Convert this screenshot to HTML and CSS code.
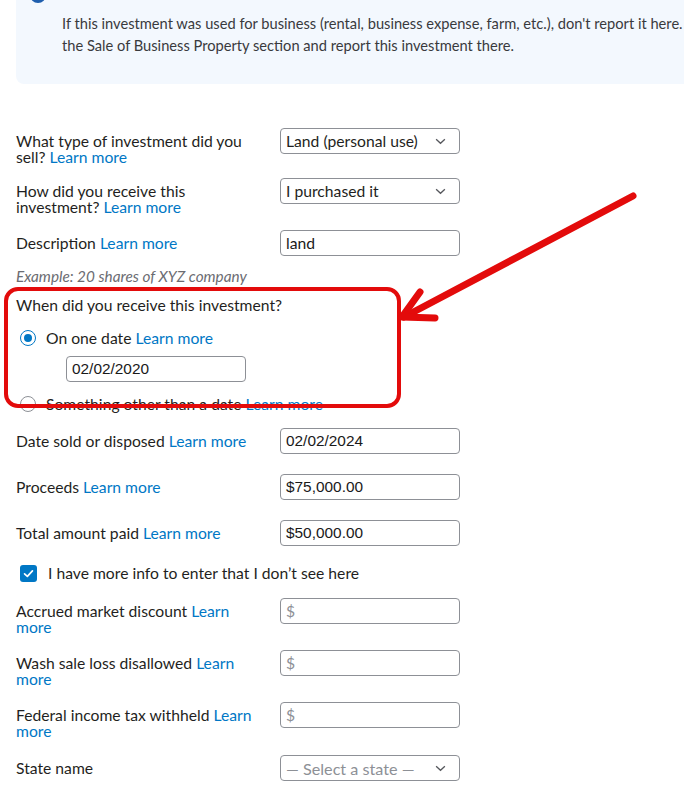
FILE: index.html
```html
<!DOCTYPE html>
<html lang="en">
<head>
<meta charset="utf-8">
<title>Investment sale</title>
<link rel="stylesheet" href="styles.css">
</head>
<body>
<div class="page">
  <div class="banner">
    <div class="banner-head"><span class="info-dot"></span></div>
    <p class="banner-text">If this investment was used for business (rental, business expense, farm, etc.), don't report it here. Go to the Sale of Business Property section and report this investment there.</p>
  </div>

  <form class="form">
    <div class="row">
      <div class="label">What type of investment did you sell? <a class="link">Learn more</a></div>
      <div class="field select"><span>Land (personal use)</span><svg class="chev" viewBox="0 0 12 8"><path d="M1 1.5 L6 6 L11 1.5"/></svg></div>
    </div>
    <div class="row row-g12">
      <div class="label">How did you receive this investment? <a class="link">Learn more</a></div>
      <div class="field select"><span>I purchased it</span><svg class="chev" viewBox="0 0 12 8"><path d="M1 1.5 L6 6 L11 1.5"/></svg></div>
    </div>
    <div class="row row-g14">
      <div class="label">Description <a class="link">Learn more</a></div>
      <div class="field"><span class="val-text">land</span></div>
    </div>
    <p class="hint">Example: 20 shares of XYZ company</p>

    <div class="receive">
      <p class="question">When did you receive this investment?</p>
      <div class="radio-row">
        <span class="radio checked"></span>
        <span class="radio-label">On one date <a class="link">Learn more</a></span>
      </div>
      <div class="field date-field"><span class="val">02/02/2020</span></div>
      <div class="radio-row radio-row-2">
        <span class="radio"></span>
        <span class="radio-label">Something other than a date <a class="link">Learn more</a></span>
      </div>
    </div>

    <div class="row row-sold">
      <div class="label">Date sold or disposed <a class="link">Learn more</a></div>
      <div class="field"><span class="val">02/02/2024</span></div>
    </div>
    <div class="row row-g20">
      <div class="label">Proceeds <a class="link">Learn more</a></div>
      <div class="field"><span class="val">$75,000.00</span></div>
    </div>
    <div class="row row-g20">
      <div class="label">Total amount paid <a class="link">Learn more</a></div>
      <div class="field"><span class="val">$50,000.00</span></div>
    </div>

    <div class="check-row">
      <span class="checkbox"><svg viewBox="0 0 16 16"><path d="M3.8 8.3 L6.8 11 L12.2 5.2"/></svg></span>
      <span class="check-label">I have more info to enter that I don’t see here</span>
    </div>

    <div class="row row-accrued">
      <div class="label">Accrued market discount <a class="link">Learn more</a></div>
      <div class="field"><span class="ph">$</span></div>
    </div>
    <div class="row row-g14">
      <div class="label">Wash sale loss disallowed <a class="link">Learn more</a></div>
      <div class="field"><span class="ph">$</span></div>
    </div>
    <div class="row row-g14">
      <div class="label">Federal income tax withheld <a class="link">Learn more</a></div>
      <div class="field"><span class="ph">$</span></div>
    </div>
    <div class="row row-g15">
      <div class="label">State name</div>
      <div class="field select"><span class="ph-text">— Select a state —</span><svg class="chev" viewBox="0 0 12 8"><path d="M1 1.5 L6 6 L11 1.5"/></svg></div>
    </div>
  </form>

  <div class="highlight-box"></div>
  <svg class="arrow" viewBox="0 0 684 804">
    <path d="M633 196 L404 317"/>
    <path d="M420 292 L402 317 L435 318"/>
  </svg>
</div>
</body>
</html>
```

FILE: styles.css
```css
html, body {
  margin: 0;
  padding: 0;
  background: #ffffff;
}
body {
  font-family: Lato, "Noto Sans", "Liberation Sans", sans-serif;
  color: #1f1f22;
  overflow: hidden;
  width: 684px;
  height: 804px;
}
.page {
  position: relative;
  width: 684px;
  height: 804px;
  overflow: hidden;
}

/* banner */
.banner {
  margin: -20px -80px 0 16px;
  padding: 7px 0 27px 46px;
  background: #f3f8fe;
  border-radius: 0 0 0 8px;
}
.banner-head {
  height: 16px;
  margin-left: -32px;
}
.info-dot {
  display: block;
  width: 16px;
  height: 16px;
  border-radius: 50%;
  background: #1f5fae;
}
.banner-text {
  margin: 10px 0 0 0;
  font-size: 14.66px;
  line-height: 22px;
  color: #393a3d;
  width: 679px;
}

/* form */
.form {
  padding-left: 16px;
  margin: 44px 0 0 0;
}
.row {
  display: flex;
  align-items: flex-start;
  gap: 16px;
}
.row-g12 { margin-top: 12.5px; }
.row-g14 { margin-top: 14.5px; }
.row-g15 { margin-top: 15.5px; }
.row-g20 { margin-top: 20px; }
.label {
  width: 248px;
  padding-top: 4.5px;
  font-size: 15.7px;
  line-height: 16.5px;
  color: #1f1f22;
}
.link {
  color: #0077c5;
  text-decoration: none;
}
.field {
  box-sizing: border-box;
  width: 180px;
  height: 26px;
  border: 1px solid #8d9096;
  border-radius: 4px;
  background: #fff;
  display: flex;
  align-items: center;
  padding: 0 6px 0 5px;
  font-size: 15.7px;
}
.select {
  justify-content: space-between;
  color: #1f1f22;
  padding-right: 13px;
}
.chev {
  width: 11px;
  height: 7px;
  fill: none;
  stroke: #55575c;
  stroke-width: 1.5;
}
.val {
  font-family: "Liberation Sans", Arial, sans-serif;
  font-size: 15.4px;
  color: #1a1a1a;
}
.val-text {
  color: #1a1a1a;
}
.ph,
.ph-text {
  color: #8d9096;
}
.ph-text {
  font-size: 16.2px;
}
.hint {
  margin: 12px 0 0 0;
  font-size: 15.3px;
  line-height: 16px;
  font-style: italic;
  color: #6b6c72;
}

/* receive section */
.receive {
  margin-top: 11px;
}
.question {
  margin: 0;
  font-size: 15.7px;
  line-height: 20px;
  color: #1f1f22;
}
.radio-row {
  display: flex;
  align-items: center;
  gap: 10px;
  margin: 14px 0 0 4px;
  height: 18px;
}
.radio {
  box-sizing: border-box;
  width: 16px;
  height: 16px;
  border-radius: 50%;
  border: 1px solid #8d9096;
  background: #fff;
  position: relative;
  flex: none;
}
.radio.checked {
  border-color: #0077c5;
}
.radio.checked::after {
  content: "";
  position: absolute;
  left: 3px;
  top: 3px;
  width: 8px;
  height: 8px;
  border-radius: 50%;
  background: #0077c5;
}
.radio-label {
  font-size: 15.7px;
  line-height: 18px;
  white-space: nowrap;
}
.date-field {
  margin: 9px 0 0 50px;
}
.radio-row-2 {
  margin-top: 13px;
}
.row-sold {
  margin-top: 15px;
}

/* checkbox */
.check-row {
  display: flex;
  align-items: center;
  gap: 11px;
  margin: 18px 0 0 4px;
  height: 18px;
}
.checkbox {
  width: 17px;
  height: 17px;
  border-radius: 3px;
  background: #0077c5;
  display: flex;
  align-items: center;
  justify-content: center;
}
.checkbox svg {
  width: 15px;
  height: 15px;
  fill: none;
  stroke: #fff;
  stroke-width: 1.8;
  stroke-linecap: round;
  stroke-linejoin: round;
}
.check-label {
  font-size: 15.7px;
  line-height: 18px;
  color: #1f1f22;
}
.row-accrued {
  margin-top: 16px;
}

/* annotation overlays */
.highlight-box {
  position: absolute;
  left: 4px;
  top: 287px;
  width: 397px;
  height: 121px;
  box-sizing: border-box;
  border: 4px solid #e30b0b;
  border-radius: 14px;
  pointer-events: none;
}
.arrow {
  position: absolute;
  left: 0;
  top: 0;
  width: 684px;
  height: 804px;
  fill: none;
  stroke: #e30b0b;
  stroke-width: 7;
  stroke-linecap: round;
  stroke-linejoin: round;
  pointer-events: none;
}
```
